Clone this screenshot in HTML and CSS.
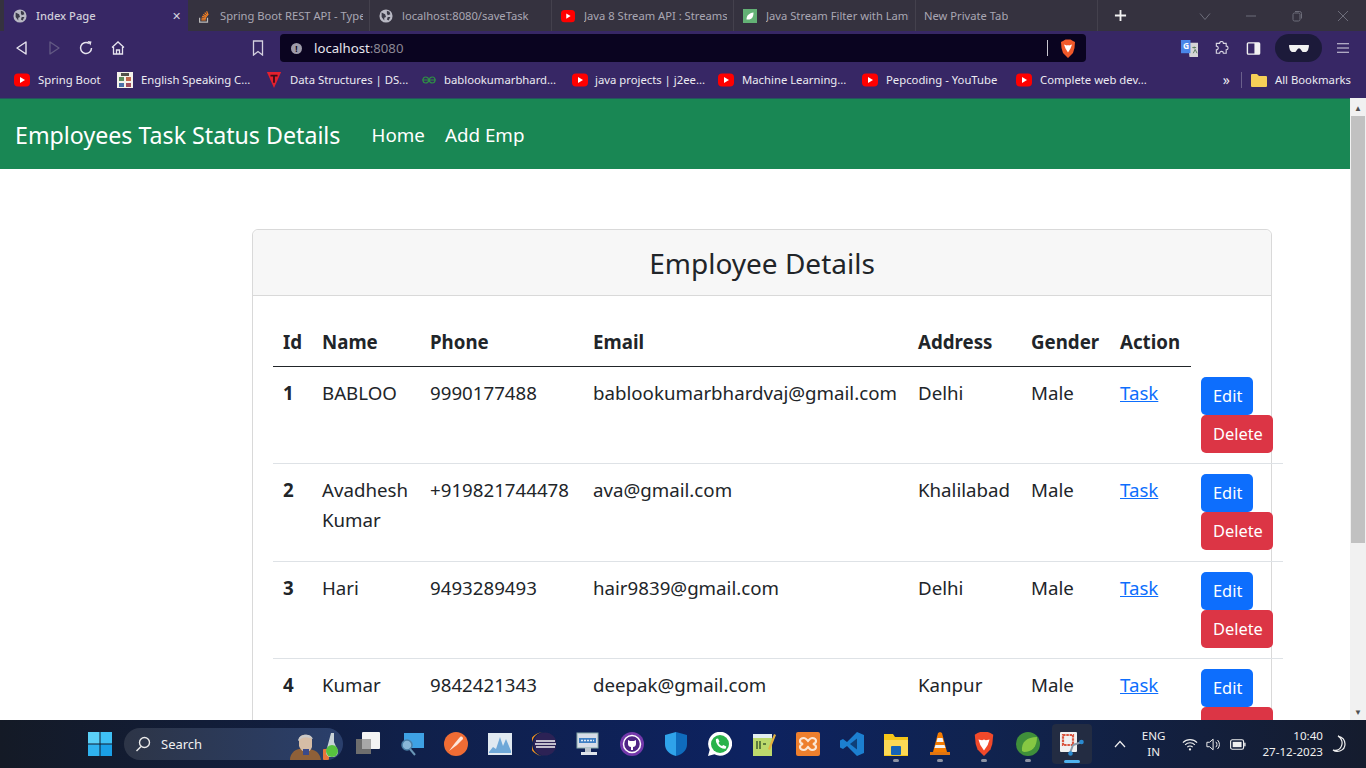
FILE: index.html
```html
<!DOCTYPE html>
<html lang="en">

<head>
    <meta charset="UTF-8">
    <meta name="viewport" content="width=device-width, initial-scale=1.0">
    <title>Index Page</title>
    <link rel="stylesheet" href="styles.css">
</head>

<body>
    <!-- tabs -->
    <div class="tabstrip">
        <div class="tab tab-active">
            <svg class="fav" viewBox="0 0 16 16"><circle cx="8" cy="8" r="7.500" fill="#b9b9c4"/><path d="M3 4l4 2 1 3-2 1v3L3 9zM9 2l3 1 1 3-3 1-1-2zM10 9l3 0-2 4-2-1z" fill="#3a3a48"/></svg>
            <span class="tab-title">Index Page</span>
            <span class="tab-close">✕</span>
        </div>
        <div class="tab">
            <svg class="fav" viewBox="0 0 16 16"><path d="M3 10v5h9v-5" fill="none" stroke="#bcbbbb" stroke-width="1.400"/><path d="M5 12.500h5M5.200 10.400l5 .5M5.800 8.300l4.800 1.300M7 6.200l4.300 2.500M8.800 4.200l3.400 3.500M11 2.500l1.800 4.400" stroke="#f48024" stroke-width="1.300"/></svg>
            <span class="tab-title">Spring Boot REST API - Type</span>
        </div>
        <div class="tab">
            <svg class="fav" viewBox="0 0 16 16"><circle cx="8" cy="8" r="7.500" fill="#b9b9c4"/><path d="M3 4l4 2 1 3-2 1v3L3 9zM9 2l3 1 1 3-3 1-1-2zM10 9l3 0-2 4-2-1z" fill="#3a3a48"/></svg>
            <span class="tab-title">localhost:8080/saveTask</span>
        </div>
        <div class="tab">
            <svg class="fav" viewBox="0 0 16 16"><rect x="0" y="1" width="16" height="14" rx="4" fill="#f00"/><path d="M6 5l5 3-5 3z" fill="#fff"/></svg>
            <span class="tab-title">Java 8 Stream API : Streams</span>
        </div>
        <div class="tab">
            <svg class="fav" viewBox="0 0 16 16"><rect width="16" height="16" fill="#63b175"/><path d="M4 12c0-5 3-7 8-8 0 5-2 8-6 8z" fill="#fff"/></svg>
            <span class="tab-title">Java Stream Filter with Lamb</span>
        </div>
        <div class="tab tab-new">
            <span class="tab-title">New Private Tab</span>
        </div>
        <span class="tab-plus">
            <svg viewBox="0 0 14 14"><path d="M7 1v12M1 7h12" stroke="#f2f2f2" stroke-width="2"/></svg>
        </span>
        <div class="win-buttons">
            <svg viewBox="0 0 12 12"><path d="M1 3.500l5 6 5-6" fill="none" stroke="#6d6d7a" stroke-width="1"/></svg>
            <svg viewBox="0 0 12 12"><path d="M1 6h10" stroke="#6d6d7a" stroke-width="1"/></svg>
            <svg viewBox="0 0 12 12"><rect x="2" y="3" width="7" height="8" rx="1.500" fill="none" stroke="#6d6d7a"/><path d="M4 1.500h4.500a2 2 0 0 1 2 2v5" fill="none" stroke="#6d6d7a"/></svg>
            <svg viewBox="0 0 12 12"><path d="M1 1l10 10M11 1L1 11" stroke="#6d6d7a" stroke-width="1"/></svg>
        </div>
    </div>

    <!-- address bar -->
    <div class="toolbar">
        <div class="nav-icons">
            <svg viewBox="0 0 16 16"><path d="M12 2L3 8l9 6z" fill="none" stroke="#e6e3ee" stroke-width="1.400" stroke-linejoin="round"/></svg>
            <svg viewBox="0 0 16 16"><path d="M4 2l9 6-9 6z" fill="none" stroke="#635a84" stroke-width="1.300" stroke-linejoin="round"/></svg>
            <svg viewBox="0 0 16 16"><path d="M13.500 8A5.500 5.500 0 1 1 11 3.400" fill="none" stroke="#e6e3ee" stroke-width="1.500"/><path d="M9.500 1l4 .5-1 4z" fill="#e6e3ee"/></svg>
            <svg viewBox="0 0 16 16"><path d="M2 7.500L8 2l6 5.500M3.500 7v7h9V7M6.500 14v-4h3v4" fill="none" stroke="#e6e3ee" stroke-width="1.300"/></svg>
        </div>
        <svg class="bookmark-icon" viewBox="0 0 12 16"><path d="M1.500 1h9v14L6 11.500 1.500 15z" fill="none" stroke="#d4d0df" stroke-width="1.300"/></svg>
        <div class="urlbar">
            <span class="info-dot">!</span>
            <span class="url-host">localhost</span><span class="url-port">:8080</span>
            <span class="url-sep"></span>
            <svg class="brave-mini" viewBox="0 0 16 18"><path d="M3 1.500L5.500 0h5L13 1.500l2 1-.5 6-1.500 5-5 5-5-5-1.500-5-.5-6z" fill="#f1592a"/><path d="M4 5l3 1 1-.5 1 .5 3-1-1.500 4L8 13 5.500 9z" fill="#fff"/></svg>
        </div>
        <div class="tool-icons">
            <svg class="ic-translate" viewBox="0 0 18 18"><path d="M7 3h11v15H9z" fill="#d6d6d6"/><path d="M12 8h4M14 7v2M13 14l2-4 2 4" fill="none" stroke="#5a7a5a" stroke-width="1"/><rect x="0" y="0" width="10" height="14" fill="#4a86e8"/><text x="2" y="10" class="ic-g">G</text></svg>
            <svg class="ic-puzzle" viewBox="0 0 16 16"><path d="M6 2.500a2 2 0 0 1 4 0h3v3a2 2 0 0 1 0 4v3.500h-3a2 2 0 0 0-4 0H2.500v-3.500a2 2 0 0 0 0-4v-3z" fill="none" stroke="#d8d5e2" stroke-width="1.200"/></svg>
            <svg class="ic-side" viewBox="0 0 16 16"><rect x="1.500" y="2" width="13" height="12" rx="1" fill="none" stroke="#f2f2f2" stroke-width="1.500"/><rect x="9" y="2" width="5.500" height="12" fill="#f2f2f2"/></svg>
            <span class="private-pill">
                <svg viewBox="0 0 22 10"><path d="M0 1h22v2l-1 4-2 2h-4l-3-4h-2L7 9H3L1 7 0 3z" fill="#f2f2f2"/></svg>
            </span>
            <svg class="ic-menu" viewBox="0 0 16 14"><path d="M1 2h14M1 7h14M1 12h14" stroke="#d8d5e2" stroke-width="1.300"/></svg>
        </div>
    </div>

    <!-- bookmarks -->
    <div class="bookmarks">
        <span class="bm bm-1"><svg class="fav" viewBox="0 0 16 16"><rect y="1.500" width="16" height="13" rx="4" fill="#f00"/><path d="M6 5l5 3-5 3z" fill="#fff"/></svg>Spring Boot</span>
        <span class="bm bm-2"><svg class="fav" viewBox="0 0 16 16"><rect width="16" height="16" fill="#f4f2ea"/><rect x="4" y="1" width="8" height="3" fill="#53524c"/><rect x="2" y="5" width="5" height="4" fill="#5c8a5a"/><rect x="9" y="5" width="5" height="4" fill="#c0664b"/><rect x="2" y="11" width="5" height="4" fill="#4a6fa8"/><rect x="9" y="11" width="5" height="4" fill="#a14d5b"/></svg>English Speaking C...</span>
        <span class="bm bm-3"><svg class="fav" viewBox="0 0 16 18"><path d="M0 0h16L8 18z" fill="#e5202e"/><path d="M4 3h8v2H9v7H7V5H4z" fill="#3a0d18"/></svg>Data Structures | DS...</span>
        <span class="bm bm-4"><svg class="fav" viewBox="0 0 16 16"><path d="M1 8h14M8 8c-1-4-6-4-6 0s5 4 6 0c1-4 6-4 6 0s-5 4-6 0z" fill="none" stroke="#2f8d46" stroke-width="1.200"/></svg>bablookumarbhard...</span>
        <span class="bm bm-5"><svg class="fav" viewBox="0 0 16 16"><rect y="1.500" width="16" height="13" rx="4" fill="#f00"/><path d="M6 5l5 3-5 3z" fill="#fff"/></svg>java projects | j2ee...</span>
        <span class="bm bm-6"><svg class="fav" viewBox="0 0 16 16"><rect y="1.500" width="16" height="13" rx="4" fill="#f00"/><path d="M6 5l5 3-5 3z" fill="#fff"/></svg>Machine Learning...</span>
        <span class="bm bm-7"><svg class="fav" viewBox="0 0 16 16"><rect y="1.500" width="16" height="13" rx="4" fill="#f00"/><path d="M6 5l5 3-5 3z" fill="#fff"/></svg>Pepcoding - YouTube</span>
        <span class="bm bm-8"><svg class="fav" viewBox="0 0 16 16"><rect y="1.500" width="16" height="13" rx="4" fill="#f00"/><path d="M6 5l5 3-5 3z" fill="#fff"/></svg>Complete web dev...</span>
        <span class="bm-more">»</span>
        <span class="bm-sep"></span>
        <span class="bm bm-all"><svg class="fav" viewBox="0 0 16 14"><path d="M0 2a1 1 0 0 1 1-1h5l2 2h7a1 1 0 0 1 1 1v9a1 1 0 0 1-1 1H1a1 1 0 0 1-1-1z" fill="#f6cf57"/></svg>All Bookmarks</span>
    </div>

    <!-- page -->
    <div class="viewport">
        <div class="page">
            <nav class="navbar">
                <a class="brand">Employees Task Status Details</a>
                <a class="nav-link">Home</a>
                <a class="nav-link">Add Emp</a>
            </nav>

            <div class="card">
                <div class="card-header">Employee Details</div>
                <div class="card-body">
                    <table class="table">
                        <colgroup>
                            <col class="col-id">
                            <col class="col-name">
                            <col class="col-phone">
                            <col class="col-email">
                            <col class="col-address">
                            <col class="col-gender">
                            <col class="col-action">
                            <col class="col-buttons">
                        </colgroup>
                        <thead>
                            <tr>
                                <th>Id</th>
                                <th>Name</th>
                                <th>Phone</th>
                                <th>Email</th>
                                <th>Address</th>
                                <th>Gender</th>
                                <th>Action</th>
                            </tr>
                        </thead>
                        <tbody>
                            <tr>
                                <th>1</th>
                                <td>BABLOO</td>
                                <td>9990177488</td>
                                <td>bablookumarbhardvaj@gmail.com</td>
                                <td>Delhi</td>
                                <td>Male</td>
                                <td><a class="task-link">Task</a></td>
                                <td class="btn-cell"><a class="btn btn-edit">Edit</a><a class="btn btn-delete">Delete</a></td>
                            </tr>
                            <tr>
                                <th>2</th>
                                <td>Avadhesh Kumar</td>
                                <td>+919821744478</td>
                                <td>ava@gmail.com</td>
                                <td>Khalilabad</td>
                                <td>Male</td>
                                <td><a class="task-link">Task</a></td>
                                <td class="btn-cell btn-cell-tall"><a class="btn btn-edit">Edit</a><a class="btn btn-delete">Delete</a></td>
                            </tr>
                            <tr>
                                <th>3</th>
                                <td>Hari</td>
                                <td>9493289493</td>
                                <td>hair9839@gmail.com</td>
                                <td>Delhi</td>
                                <td>Male</td>
                                <td><a class="task-link">Task</a></td>
                                <td class="btn-cell"><a class="btn btn-edit">Edit</a><a class="btn btn-delete">Delete</a></td>
                            </tr>
                            <tr>
                                <th>4</th>
                                <td>Kumar</td>
                                <td>9842421343</td>
                                <td>deepak@gmail.com</td>
                                <td>Kanpur</td>
                                <td>Male</td>
                                <td><a class="task-link">Task</a></td>
                                <td class="btn-cell"><a class="btn btn-edit">Edit</a><a class="btn btn-delete">Delete</a></td>
                            </tr>
                        </tbody>
                    </table>
                </div>
            </div>
        </div>
        <div class="scrollbar">
            <span class="sb-arrow sb-arrow-top">▲</span>
            <div class="sb-track"><div class="sb-thumb"></div></div>
            <span class="sb-arrow">▼</span>
        </div>
    </div>

    <!-- windows taskbar -->
    <div class="taskbar">
        <svg class="start" viewBox="0 0 24 24"><rect width="11.500" height="11.500" fill="#5bd0f7"/><rect x="12.500" width="11.500" height="11.500" fill="#3fc0f4"/><rect y="12.500" width="11.500" height="11.500" fill="#2fb2ef"/><rect x="12.500" y="12.500" width="11.500" height="11.500" fill="#1a9fe6"/></svg>
        <div class="search">
            <svg viewBox="0 0 16 16"><circle cx="9.500" cy="6.500" r="5" fill="none" stroke="#e8e8e8" stroke-width="1.400"/><path d="M6 10.500l-4.500 4.500" stroke="#e8e8e8" stroke-width="1.500"/></svg>
            <span>Search</span>
            <svg class="search-art" viewBox="0 0 48 27"><path d="M0 27c0-6 4-10 9-11l7-1 7 2c4 1 7 4 8 10z" fill="#8f6038"/><path d="M9 6c0-5 12-6 13 0v8c-1 3-3 5-6 5s-6-3-7-6z" fill="#d6bda6"/><path d="M8 8C8 1 21-1 23 6l-3-1c-3-1-6-1-8 0z" fill="#c9c9c9"/><rect x="13" y="16" width="6" height="6" fill="#3b4a8a"/><rect x="33" y="16" width="6" height="11" rx="1" fill="#e8773a"/><path d="M41 0h3v9l3.500 8a5 5 0 0 1-4 7h-4a5 5 0 0 1-3-7z" fill="#c9d4d8"/><circle cx="42" cy="18" r="6" fill="#57c23e"/></svg>
        </div>
        <div class="task-icons">
            <span class="task-icon"><svg viewBox="0 0 24 24"><rect x="0" y="7" width="15" height="15" fill="#6e6e6e"/><rect x="6" y="0" width="18" height="17" fill="#f4f4f4" rx="1"/><rect x="6" y="7" width="9" height="10" fill="#a8a8a8"/></svg></span>
            <span class="task-icon"><svg viewBox="0 0 24 24"><rect x="4" y="1" width="20" height="15" fill="#3ea1e4"/><circle cx="7" cy="13" r="5" fill="#8ab7d8" stroke="#4a7ea6" stroke-width="1.500"/><path d="M10 17l5 6" stroke="#6a96b6" stroke-width="2"/></svg></span>
            <span class="task-icon"><svg viewBox="0 0 24 24"><circle cx="12" cy="12" r="12" fill="#ef6c34"/><path d="M5 19l6-8 5-6c2-1 3 0 3 2l-6 6z" fill="#fde6da"/></svg></span>
            <span class="task-icon"><svg viewBox="0 0 24 24"><rect y="1" width="24" height="22" fill="#e0e9f1"/><path d="M1 20l4-5 3 2 4-12 3 9 3-7 5 12v2H1z" fill="#6fa8d8"/></svg></span>
            <span class="task-icon"><svg viewBox="0 0 24 24"><circle cx="13" cy="12" r="11.500" fill="#2c2255"/><path d="M12 0A12 12 0 0 0 12 24a14 12 0 0 1 0-24z" fill="#f7941e"/><path d="M4 9h19M3 12h21M4 15h19" stroke="#f4f4f4" stroke-width="1.500"/></svg></span>
            <span class="task-icon"><svg viewBox="0 0 24 24"><rect x="1" y="1" width="21" height="15" fill="#d7dde8" stroke="#8aa" stroke-width="1"/><rect x="3" y="6" width="17" height="5" fill="#3f7fc4"/><path d="M5 8.500h13" stroke="#dfeaf5" stroke-width="1.500" stroke-dasharray="2 1"/><rect x="9" y="16" width="6" height="4" fill="#b9c2cc"/><rect x="5" y="20" width="16" height="3" fill="#dfe4ea"/></svg></span>
            <span class="task-icon"><svg viewBox="0 0 24 24"><circle cx="12" cy="12" r="12" fill="#7439ab"/><circle cx="12" cy="12" r="8.500" fill="#4f2585" stroke="#fff" stroke-width="1.500"/><path d="M8 8l2 1h4l2-1v4c0 2-1.500 3-3 3v3h-2v-3c-1.500 0-3-1-3-3z" fill="#fff"/></svg></span>
            <span class="task-icon"><svg viewBox="0 0 24 24"><path d="M12 0l11 3v9c0 6-4 10-11 12z" fill="#0f6cbd"/><path d="M12 0L1 3v9c0 6 4 10 11 12z" fill="#2fa3ea"/></svg></span>
            <span class="task-icon"><svg viewBox="0 0 24 24"><path d="M0 24l1.700-6.300A12 12 0 1 1 6.400 22.300z" fill="#fff"/><circle cx="12" cy="12" r="9" fill="#29b34a"/><path d="M8 7l2-.5 1.500 3-1 1.500c1 1.500 2 2.500 3.500 3l1.300-1 3 1.500-.5 2c-5 1.500-11-5-9.800-9.500z" fill="#fff"/></svg></span>
            <span class="task-icon"><svg viewBox="0 0 24 24"><path d="M1 2h19v22H1z" fill="#bcd96c"/><rect x="1" y="2" width="19" height="4" fill="#e2eef0"/><path d="M5 9v8M8 9v8M11 12h3" stroke="#3d5d2f" stroke-width="1.500"/><path d="M16 17L22 2l2 1-6 15z" fill="#e3b341"/></svg></span>
            <span class="task-icon"><svg viewBox="0 0 24 24"><rect width="24" height="24" rx="2" fill="#ee7f2d"/><path d="M8 6c-3 0-4 2-4 3s1 2.500 3 3c-2 .5-3 2-3 3s1 3 4 3c2 0 3-2 4-3 1 1 2 3 4 3 3 0 4-2 4-3s-1-2.500-3-3c2-.5 3-2 3-3s-1-3-4-3c-2 0-3 2-4 3-1-1-2-3-4-3z" fill="none" stroke="#fbe7d6" stroke-width="2.200"/></svg></span>
            <span class="task-icon"><svg viewBox="0 0 24 24"><path d="M17 0l7 3v18l-7 3L7 14l-4 3-3-1.500V8.500L3 7l4 3z" fill="#1c7fd0"/><path d="M17 6.500v11L10 12z" fill="#0f3f77"/></svg></span>
            <span class="task-icon task-running"><svg viewBox="0 0 24 24"><path d="M0 2h9l2 3h13v19H0z" fill="#f5c518"/><rect x="0" y="8" width="24" height="15" fill="#fcd955"/><rect x="7" y="14" width="10" height="9" rx="1" fill="#1565b8"/></svg></span>
            <span class="task-icon task-running"><svg viewBox="0 0 24 24"><path d="M12 0l2 1 5 19H5L10 1z" fill="#f57c00"/><path d="M9.500 6h5l1 4h-7zM7.500 13h9l1 3h-11z" fill="#f4f4f4"/><rect x="2" y="20" width="20" height="3" fill="#e1740f"/></svg></span>
            <span class="task-icon task-running"><svg viewBox="0 0 24 26"><path d="M5 1l3-1h8l3 1 3 2-1 10-2 6-7 7-7-7-2-6L2 3z" fill="#f1492a"/><path d="M6 8l4 1 2-1 2 1 4-1-2 6-4 6-4-6z" fill="#fff"/></svg></span>
            <span class="task-icon task-running"><svg viewBox="0 0 24 24"><circle cx="12" cy="12" r="12" fill="#3f8f3a"/><path d="M6 19C5 10 11 5 21 5c0 10-5 15-13 15z" fill="#86c743"/></svg></span>
        </div>
        <div class="snip-btn">
            <svg viewBox="0 0 24 24"><rect x="0" y="0" width="17" height="20" rx="1" fill="#f1f1f1"/><rect x="3" y="3" width="10" height="10" fill="none" stroke="#d9553f" stroke-width="2.200" stroke-dasharray="2.500 .8"/><path d="M13 13l9-3M13 13l-3 8" stroke="#8a9aaa" stroke-width="2"/><circle cx="21.500" cy="10" r="2.300" fill="#2a8ad0"/><circle cx="10.500" cy="21.500" r="2.300" fill="#2a8ad0"/></svg>
        </div>
        <div class="tray">
            <svg class="tray-up" viewBox="0 0 12 8"><path d="M1 7l5-5.500L11 7" fill="none" stroke="#f0f0f0" stroke-width="1.200"/></svg>
            <div class="lang">ENG<br>IN</div>
            <svg class="tray-wifi" viewBox="0 0 18 14"><path d="M1 5a11 11 0 0 1 16 0M3.500 7.500a7.500 7.500 0 0 1 11 0M6 10a4 4 0 0 1 6 0" fill="none" stroke="#f0f0f0" stroke-width="1.200"/><circle cx="9" cy="12.500" r="1.300" fill="#f0f0f0"/></svg>
            <svg class="tray-vol" viewBox="0 0 18 16"><path d="M1 5.500h3L8 2v12l-4-3.500H1z" fill="none" stroke="#f0f0f0" stroke-width="1.100"/><path d="M11 5a4 4 0 0 1 0 6M13 3a7 7 0 0 1 0 10" fill="none" stroke="#f0f0f0" stroke-width="1.100"/></svg>
            <svg class="tray-bat" viewBox="0 0 18 12"><rect x=".7" y=".7" width="14.600" height="10.600" rx="2" fill="none" stroke="#f0f0f0" stroke-width="1.300"/><rect x="3" y="3" width="10" height="6" fill="#f0f0f0"/><rect x="16" y="4" width="1.500" height="4" fill="#f0f0f0"/></svg>
            <div class="clock">10:40<br>27-12-2023</div>
            <svg class="tray-moon" viewBox="0 0 14 18"><path d="M6 1a8 8 0 0 1 3 11c-1 2-4 4-8 3 4 3 12 1 12-6 0-4-3-7-7-8z" fill="none" stroke="#f0f0f0" stroke-width="1.200"/></svg>
        </div>
    </div>
</body>

</html>
```

FILE: styles.css
```css
/* general */
* {
    box-sizing: border-box;
}

html,
body {
    height: 100%;
}

body {
    margin: 0;
    display: flex;
    flex-direction: column;
    overflow: hidden;
    font-family: "Noto Sans", "Open Sans", sans-serif;
    background-color: #fff;
    color: #212529;
}

svg {
    display: block;
    flex-shrink: 0;
}

/* tabs */
.tabstrip {
    height: 31px;
    display: flex;
    align-items: stretch;
    background-color: #35323f;
    font-size: 11.2px;
    color: #a9a7b3;
}

.tab {
    flex: 0 0 182px;
    display: flex;
    align-items: center;
    padding: 0 6px 0 9px;
    overflow: hidden;
    white-space: nowrap;
    border-right: 1px solid #44414d;
}

.tab .fav {
    width: 14px;
    height: 14px;
    margin-right: 9px;
}

.tab-title {
    overflow: hidden;
}

.tab-active {
    flex-basis: 184px;
    margin-left: 4px;
    background-color: #372765;
    color: #cfcdd9;
    border-right: none;
    font-weight: 500;
}

.tab-close {
    margin-left: auto;
    margin-right: 1px;
    font-size: 11px;
    color: #d5d3de;
}

.tab-new {
    padding-left: 8px;
}

.tab-plus {
    display: flex;
    align-items: center;
    padding-left: 16px;
}

.tab-plus svg {
    width: 13px;
    height: 13px;
}

.win-buttons {
    margin-left: auto;
    display: flex;
    align-items: center;
    gap: 34px;
    padding-right: 17px;
}

.win-buttons svg {
    width: 12px;
    height: 12px;
}

/* address bar */
.toolbar {
    height: 34px;
    display: flex;
    align-items: center;
    background-color: #372765;
    padding-left: 14px;
}

.nav-icons {
    display: flex;
    gap: 16px;
    align-items: center;
}

.nav-icons svg {
    width: 16px;
    height: 16px;
}

.bookmark-icon {
    width: 12px;
    height: 16px;
    margin-left: 126px;
}

.urlbar {
    width: 806px;
    height: 28px;
    margin-left: 16px;
    display: flex;
    align-items: center;
    padding-left: 11px;
    background-color: #0a0420;
    border-radius: 4px;
    font-size: 13.200px;
    color: #e8e6ee;
}

.info-dot {
    width: 11px;
    height: 11px;
    margin-right: 12px;
    border-radius: 50%;
    background-color: #9f9caa;
    color: #0a0420;
    font-size: 8px;
    line-height: 11px;
    text-align: center;
    font-weight: 700;
}

.url-port {
    color: #8a8794;
}

.url-sep {
    width: 1px;
    height: 16px;
    margin-left: auto;
    background-color: #c8c6d0;
}

.brave-mini {
    width: 16px;
    height: 19px;
    margin: 0 10px 0 12px;
}

.tool-icons {
    display: flex;
    align-items: center;
    margin-left: 95px;
}

.ic-g {
    font-size: 9px;
    fill: #fff;
    font-weight: 700;
}

.ic-translate {
    width: 17px;
    height: 17px;
}

.ic-puzzle {
    width: 15px;
    height: 15px;
    margin-left: 16px;
}

.ic-side {
    width: 15px;
    height: 15px;
    margin-left: 17px;
}

.private-pill {
    width: 47px;
    height: 28px;
    margin-left: 14px;
    display: flex;
    align-items: center;
    justify-content: center;
    background-color: #1c1a3a;
    border-radius: 14px;
}

.private-pill svg {
    width: 20px;
    height: 9px;
}

.ic-menu {
    width: 14px;
    height: 12px;
    margin-left: 14px;
}

/* bookmarks */
.bookmarks {
    height: 33px;
    display: flex;
    align-items: center;
    background-color: #372765;
    font-size: 11.300px;
    color: #ecebf2;
    padding: 0 0 4px 14px;
    white-space: nowrap;
}

.bm {
    display: flex;
    align-items: center;
}

.bm .fav {
    width: 16px;
    height: 16px;
    margin-right: 8px;
}

.bm-1 {
    width: 103px;
}

.bm-2 {
    width: 149px;
}

.bm-3 {
    width: 155px;
}

.bm-4 {
    width: 151px;
}

.bm-4 .fav,
.bm-5 .fav {
    margin-right: 7px;
}

.bm-5 {
    width: 146px;
}

.bm-6 {
    width: 144px;
}

.bm-7 {
    width: 154px;
}

.bm-more {
    margin-left: auto;
    font-size: 14px;
}

.bm-sep {
    width: 1px;
    height: 16px;
    margin: 0 9px 0 11px;
    background-color: #6a5f8c;
}

.bm-all {
    margin-right: 15px;
}

/* page */
.viewport {
    height: 622px;
    display: flex;
    overflow: hidden;
}

.page {
    flex: 1;
    overflow: hidden;
}

.navbar {
    height: 71px;
    display: flex;
    align-items: center;
    padding: 1px 0 0 15px;
    background-color: #198754;
    border-top: 1px solid #24565e;
    color: #fff;
}

.brand {
    font-size: 23.200px;
    margin-right: 31px;
}

.nav-link {
    font-size: 18.800px;
    margin-right: 20px;
}

.card {
    width: 1020px;
    margin: 60px 0 0 252px;
    border: 1px solid #d9d9d9;
    border-radius: 6px;
}

.card-header {
    height: 66px;
    display: flex;
    align-items: center;
    justify-content: center;
    font-size: 28px;
    background-color: #f7f7f7;
    border-bottom: 1px solid #d9d9d9;
    border-radius: 6px 6px 0 0;
}

.card-body {
    padding: 20px;
}

/* table */
.table {
    table-layout: fixed;
    width: 1010px;
    border-collapse: collapse;
    font-size: 18.700px;
    line-height: 30px;
}

.col-id {
    width: 39px;
}

.col-name {
    width: 108px;
}

.col-phone {
    width: 163px;
}

.col-email {
    width: 325px;
}

.col-address {
    width: 113px;
}

.col-gender {
    width: 89px;
}

.col-action {
    width: 81px;
}

.col-buttons {
    width: 92px;
}

th,
td {
    padding: 11px 10px 9px;
    text-align: left;
    vertical-align: top;
    border-bottom: 1px solid #dee2e6;
}

thead th {
    border-bottom: 1px solid #212529;
}

.btn-cell {
    padding: 10px;
}

.btn-cell-tall {
    padding-bottom: 11px;
}

.task-link {
    color: #0d6efd;
    text-decoration: underline;
}

.btn {
    display: inline-block;
    height: 38px;
    padding: 0 10.500px 0 12px;
    line-height: 38px;
    font-size: 16.400px;
    color: #fff;
    border-radius: 5px;
}

.btn-edit {
    background-color: #0d6efd;
}

.btn-delete {
    background-color: #dc3545;
}

/* scrollbar */
.scrollbar {
    width: 16px;
    display: flex;
    flex-direction: column;
    background-color: #f1f1f1;
}

.sb-arrow {
    height: 17px;
    font-size: 8px;
    line-height: 17px;
    text-align: center;
    color: #505050;
}

.sb-arrow-top {
    height: 18px;
    line-height: 19px;
}

.sb-track {
    flex: 1;
}

.sb-thumb {
    width: 14px;
    height: 427px;
    margin-left: 1px;
    background-color: #c1c1c1;
}

/* windows taskbar */
.taskbar {
    height: 48px;
    display: flex;
    align-items: center;
    background: linear-gradient(90deg, #141a26 0%, #10204a 30%, #0d2260 55%, #10234f 72%, #151c2e 100%);
    color: #f0f0f0;
    padding-left: 88px;
}

.start {
    width: 24px;
    height: 24px;
}

.search {
    width: 219px;
    height: 32px;
    margin-left: 12px;
    display: flex;
    align-items: center;
    padding-left: 11px;
    background: linear-gradient(90deg, #2d3547, #2a3f6c);
    border-radius: 16px;
    font-size: 13px;
    overflow: hidden;
}

.search svg {
    width: 16px;
    height: 16px;
    margin-right: 10px;
}

.search .search-art {
    width: 48px;
    height: 27px;
    margin: 5px 5px 0 auto;
}

.task-icons {
    display: flex;
    align-items: center;
    gap: 20px;
    margin-left: 13px;
}

.task-icon {
    position: relative;
}

.task-icon svg {
    width: 24px;
    height: 24px;
}

.task-running::after {
    content: "";
    position: absolute;
    left: 9px;
    bottom: -6px;
    width: 6px;
    height: 3px;
    border-radius: 2px;
    background-color: #8d93a3;
}

.snip-btn {
    position: relative;
    width: 40px;
    height: 40px;
    margin-left: 12px;
    display: flex;
    align-items: center;
    justify-content: center;
    background-color: #232c42;
    border-radius: 4px;
}

.snip-btn svg {
    width: 24px;
    height: 24px;
}

.snip-btn::after {
    content: "";
    position: absolute;
    left: 12px;
    bottom: 1px;
    width: 16px;
    height: 3px;
    border-radius: 2px;
    background-color: #4fb3ee;
}

.tray {
    display: flex;
    align-items: center;
    margin-left: auto;
    padding-right: 20px;
    font-size: 11.600px;
}

.tray-up {
    width: 12px;
    height: 8px;
}

.lang {
    margin: 0 17px 0 16px;
    text-align: center;
    line-height: 16px;
}

.tray-wifi {
    width: 16px;
    height: 13px;
}

.tray-vol {
    width: 16px;
    height: 15px;
    margin-left: 8px;
}

.tray-bat {
    width: 16px;
    height: 11px;
    margin-left: 8px;
}

.clock {
    margin-left: 16px;
    text-align: right;
    line-height: 16px;
}

.tray-moon {
    width: 14px;
    height: 18px;
    margin-left: 9px;
}
```
